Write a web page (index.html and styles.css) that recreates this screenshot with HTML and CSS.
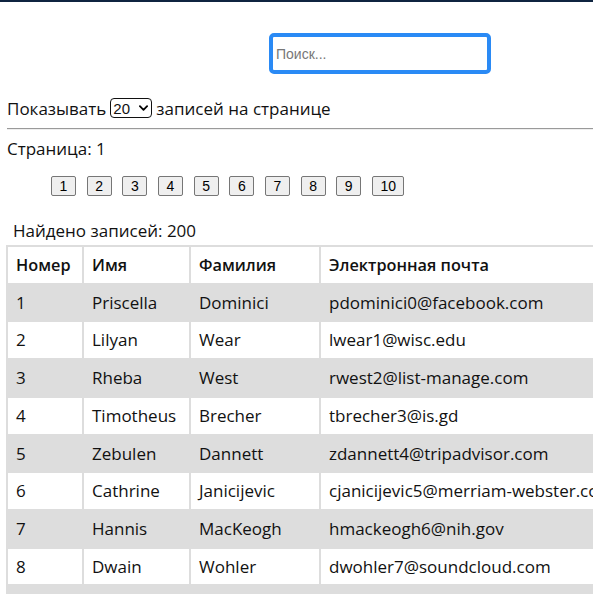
FILE: index.html
```html
<!DOCTYPE html>
<html lang="ru">
<head>
<meta charset="utf-8">
<title>Таблица</title>
<link rel="stylesheet" href="styles.css">
</head>
<body>
<div class="topbar"></div>
<div class="page">
  <div class="search-row">
    <input class="search" type="text" placeholder="Поиск...">
  </div>
  <div class="per-page">
    <span>Показывать</span>
    <span class="select"><span class="select-val">20</span><svg class="chev" viewBox="0 0 10 6" width="9" height="6"><path d="M1 1 L5 5 L9 1" fill="none" stroke="#000" stroke-width="2" stroke-linecap="round" stroke-linejoin="round"/></svg></span>
    <span>записей на странице</span>
  </div>
  <div class="rule"></div>
  <div class="page-label">Страница: 1</div>
  <ul class="pager">
    <li><button class="pbtn">1</button></li>
    <li><button class="pbtn">2</button></li>
    <li><button class="pbtn">3</button></li>
    <li><button class="pbtn">4</button></li>
    <li><button class="pbtn">5</button></li>
    <li><button class="pbtn">6</button></li>
    <li><button class="pbtn">7</button></li>
    <li><button class="pbtn">8</button></li>
    <li><button class="pbtn">9</button></li>
    <li><button class="pbtn">10</button></li>
  </ul>
  <div class="found">Найдено записей: 200</div>
  <table class="grid">
    <thead>
      <tr><th>Номер</th><th>Имя</th><th>Фамилия</th><th>Электронная почта</th></tr>
    </thead>
    <tbody>
      <tr><td>1</td><td>Priscella</td><td>Dominici</td><td>pdominici0@facebook.com</td></tr>
      <tr><td>2</td><td>Lilyan</td><td>Wear</td><td>lwear1@wisc.edu</td></tr>
      <tr><td>3</td><td>Rheba</td><td>West</td><td>rwest2@list-manage.com</td></tr>
      <tr><td>4</td><td>Timotheus</td><td>Brecher</td><td>tbrecher3@is.gd</td></tr>
      <tr><td>5</td><td>Zebulen</td><td>Dannett</td><td>zdannett4@tripadvisor.com</td></tr>
      <tr><td>6</td><td>Cathrine</td><td>Janicijevic</td><td>cjanicijevic5@merriam-webster.com</td></tr>
      <tr><td>7</td><td>Hannis</td><td>MacKeogh</td><td>hmackeogh6@nih.gov</td></tr>
      <tr><td>8</td><td>Dwain</td><td>Wohler</td><td>dwohler7@soundcloud.com</td></tr>
      <tr><td>9</td><td>Ambrose</td><td>Halfhyde</td><td>ahalfhyde8@google.ru</td></tr>
    </tbody>
  </table>
</div>
</body>
</html>
```
FILE: styles.css
```css
html, body {
  margin: 0;
  padding: 0;
  background: #ffffff;
  overflow: hidden;
}
body {
  font-family: "Open Sans", "Noto Sans", sans-serif;
  font-size: 17px;
  color: #111111;
}
.topbar {
  height: 2px;
  background: #0f2440;
}
.page {
  padding: 0 0 0 7px;
}
.search-row {
  padding: 31px 0 0 262px;
  height: 41px;
}
.search {
  box-sizing: border-box;
  width: 222px;
  height: 41px;
  border: 4px solid #2a8af5;
  border-radius: 5px;
  outline: none;
  padding: 0 0 0 3px;
  font-family: "Liberation Sans", Arial, sans-serif;
  font-size: 14px;
  color: #111;
  display: block;
}
.search::placeholder {
  color: #777777;
}
.per-page {
  margin-top: 24px;
  display: flex;
  align-items: center;
  gap: 4px;
  height: 20px;
}
.select {
  box-sizing: border-box;
  display: inline-flex;
  align-items: center;
  justify-content: space-between;
  width: 42px;
  height: 20px;
  border: 1.5px solid #111;
  border-radius: 4px;
  padding: 0 3px 0 2px;
  font-family: "Liberation Sans", Arial, sans-serif;
  font-size: 15px;
}
.rule {
  margin-top: 10px;
  height: 0;
  border-top: 1px solid #9a9a9a;
  border-bottom: 1px solid #eeeeee;
}
.page-label {
  margin-top: 9px;
  height: 20px;
  line-height: 20px;
}
.pager {
  list-style: none;
  margin: 14px 0 0 0;
  padding: 0 0 0 44px;
  display: flex;
  gap: 10.67px;
}
.pbtn {
  box-sizing: border-box;
  min-width: 25px;
  height: 20px;
  padding: 0 7.5px;
  border: 1px solid #767676;
  border-radius: 2px;
  background: #efefef;
  font-family: "Liberation Sans", Arial, sans-serif;
  font-size: 14px;
  color: #000;
  line-height: 18px;
}
.found {
  margin-top: 25px;
  padding-left: 6px;
  height: 20px;
  line-height: 20px;
}
.grid {
  margin: 4px 0 0 -1px;
  border-collapse: separate;
  border-spacing: 2px;
  background: #dddddd;
  white-space: nowrap;
}
.grid th, .grid td {
  text-align: left;
  padding: 8px 9px 8px 8px;
  height: 19.7px;
  line-height: 19.7px;
}
.grid th {
  font-size: 16.3px;
  font-weight: 600;
  background: #ffffff;
  padding-top: 9px;
  padding-bottom: 7px;
}
.grid tbody tr:nth-child(odd) td {
  background: #dddddd;
}
.grid tbody tr:nth-child(even) td {
  background: #ffffff;
}
.grid td:nth-child(1), .grid th:nth-child(1) { min-width: 57px; }
.grid td:nth-child(2), .grid th:nth-child(2) { min-width: 88px; }
.grid td:nth-child(3), .grid th:nth-child(3) { min-width: 111px; }
```
